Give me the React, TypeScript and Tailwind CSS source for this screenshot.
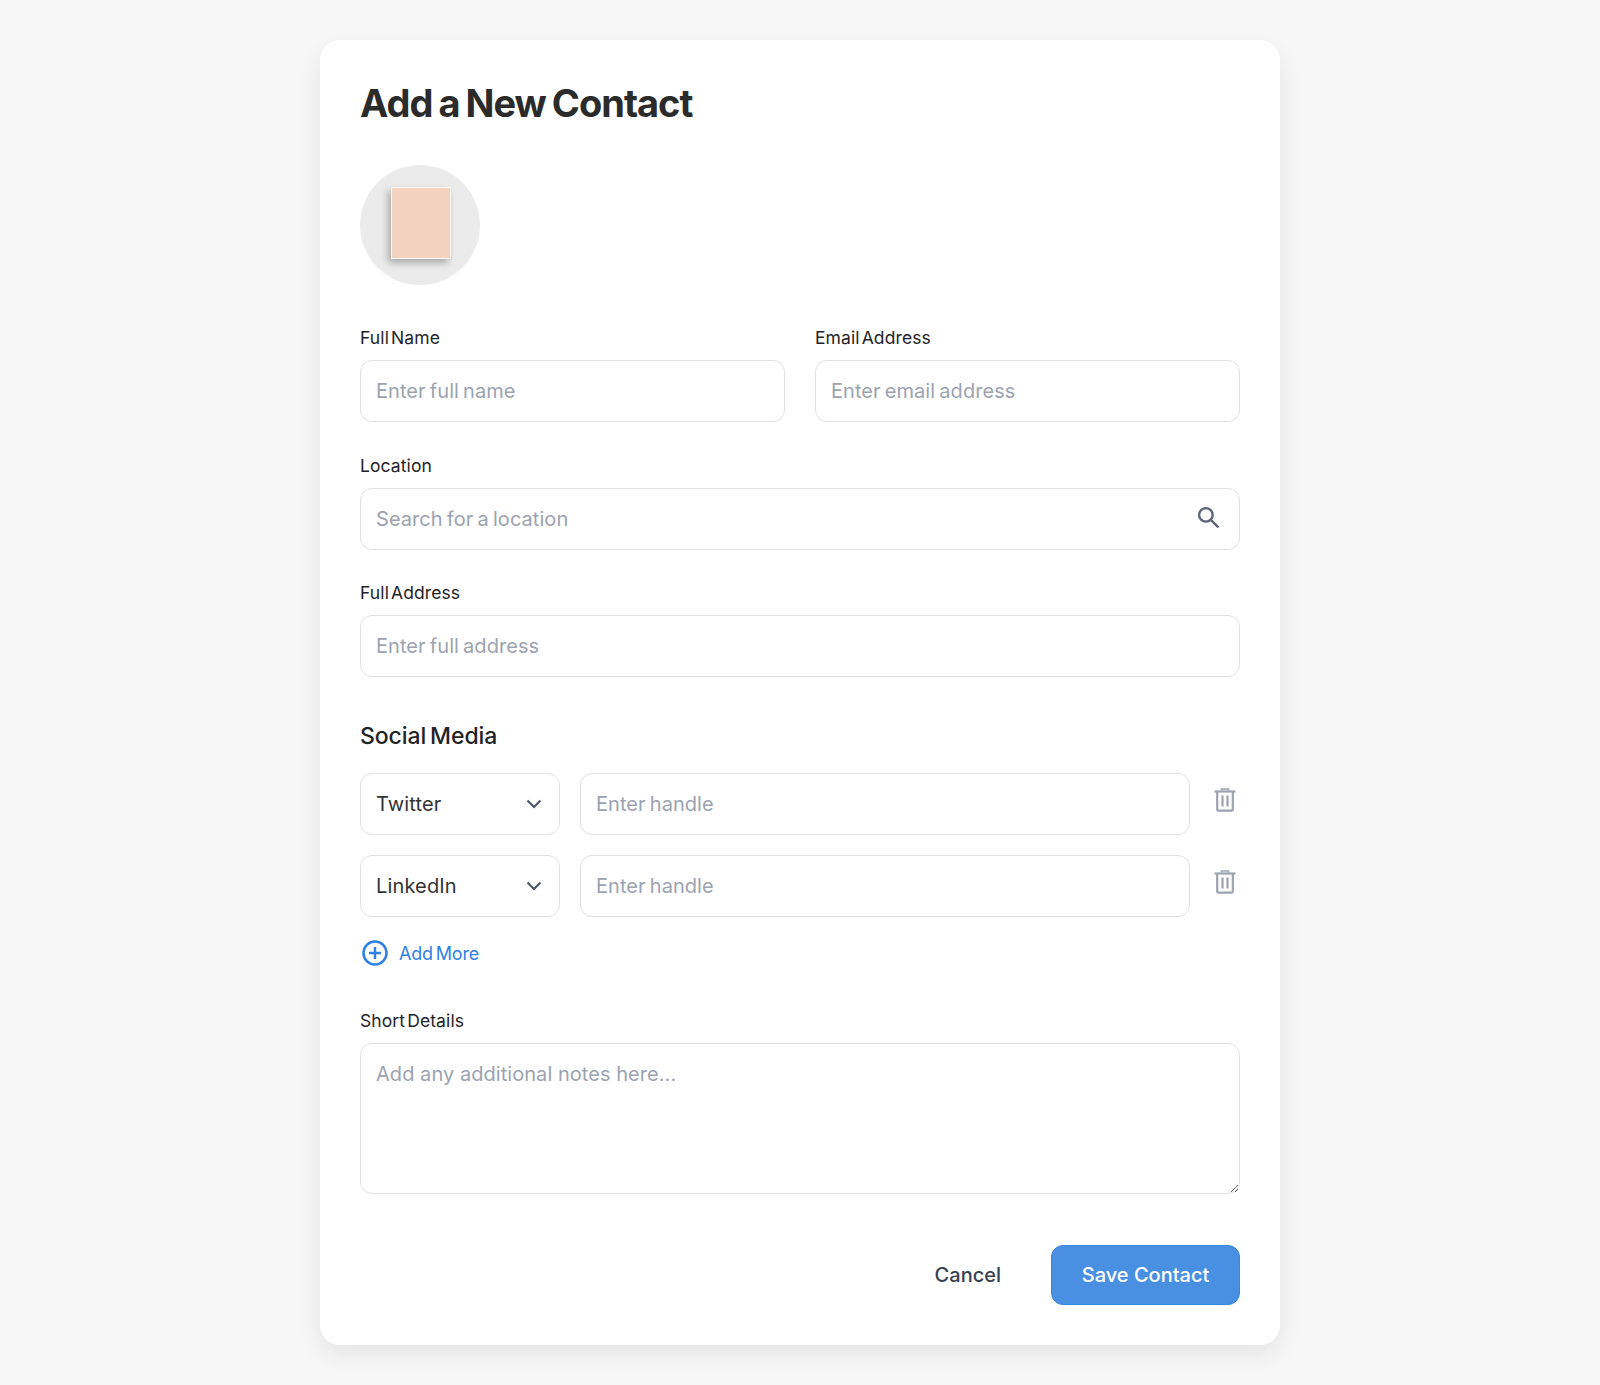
import React from "react";

const inputCls =
  "w-full h-[62px] rounded-xl border border-[#e0e0e0] bg-white px-[15px] text-[20px] text-[#333] outline-none tracking-[0.05px] [word-spacing:-1.5px] placeholder:text-[#9ca3af]";
const labelCls = "block h-6 leading-6 text-[17.5px] text-[#1f2328] tracking-[0.1px] [word-spacing:-3px] mb-[10px]";

function Trash() {
  return (
    <svg width="22" height="24" viewBox="0 0 22 24" fill="none" stroke="#9ca3af" strokeWidth="2.2" className="block">
      <path d="M0.5 3.5h21" />
      <path d="M7.5 2.5V1h7v1.5" strokeWidth="1.6" />
      <path d="M3.2 4v17.4a1.3 1.3 0 0 0 1.3 1.3h13a1.3 1.3 0 0 0 1.3-1.3V4" />
      <path d="M8.5 7.5v11M13.5 7.5v11" />
    </svg>
  );
}

function Chevron() {
  return (
    <svg width="16" height="10" viewBox="0 0 16 10" fill="none" stroke="#4b5563" strokeWidth="2" className="absolute right-[18px] top-[26px] pointer-events-none">
      <path d="M1.5 1.5 8 8l6.5-6.5" />
    </svg>
  );
}

function SocialRow({ name }: { name: string }) {
  return (
    <div className="flex items-start gap-5">
      <div className="relative w-[200px] shrink-0">
        <select className="w-full h-[62px] rounded-xl border border-[#e0e0e0] bg-white px-[15px] text-[20px] text-[#333] tracking-[0.15px] outline-none appearance-none" defaultValue={name}>
          <option>Twitter</option>
          <option>LinkedIn</option>
        </select>
        <Chevron />
      </div>
      <input className={inputCls + " flex-1 w-auto min-w-0"} placeholder="Enter handle" />
      <button className="w-[22px] ml-[4px] mr-[4px] pt-[15px] shrink-0">
        <Trash />
      </button>
    </div>
  );
}

export default function App() {
  return (
    <div className="min-h-[1385px] bg-[#f7f7f7] pt-10 font-['Inter',sans-serif]">
      <div className="mx-auto w-[960px] rounded-[20px] bg-white p-10 shadow-[0_10px_25px_rgba(0,0,0,0.08)]">
        <h1 className="text-[38px] leading-[47px] font-bold text-[#2b2b2b] tracking-[-1px] [word-spacing:-2px] mb-[38px]">Add a New Contact</h1>

        <div className="w-[120px] h-[120px] rounded-full bg-[#ebebeb] flex items-center justify-center mb-[41px]">
          <div className="w-[60px] h-[72px] ml-[2px] mb-[4px] bg-[#f4d2c0] border border-[#fdf6f2] shadow-[-3px_4px_7px_rgba(0,0,0,0.28)]" />
        </div>

        <div className="grid grid-cols-2 gap-x-[30px] mb-8">
          <div>
            <label className={labelCls}>Full Name</label>
            <input className={inputCls} placeholder="Enter full name" />
          </div>
          <div>
            <label className={labelCls}>Email Address</label>
            <input className={inputCls} placeholder="Enter email address" />
          </div>
        </div>

        <div className="mb-[31px]">
          <label className={labelCls}>Location</label>
          <div className="relative">
            <input className={inputCls} placeholder="Search for a location" />
            <svg width="25" height="25" viewBox="0 0 24 24" fill="none" stroke="#5f6678" strokeWidth="2.3" className="absolute right-[19px] top-[17px]">
              <circle cx="9.5" cy="9.5" r="6.5" />
              <path d="m14.5 14.5 7 7" />
            </svg>
          </div>
        </div>

        <div className="mb-[44px]">
          <label className={labelCls}>Full Address</label>
          <input className={inputCls} placeholder="Enter full address" />
        </div>

        <h2 className="text-[23px] leading-[30px] font-medium text-[#1f2328] tracking-[-0.1px] [word-spacing:-2px] mb-[22px]">Social Media</h2>

        <div className="flex flex-col gap-5">
          <SocialRow name="Twitter" />
          <SocialRow name="LinkedIn" />
        </div>

        <button className="flex items-center gap-[11px] mt-[21px] ml-[2px] text-[#2f80e4] text-[18px] tracking-[-0.2px] [word-spacing:-2px]">
          <svg width="26" height="26" viewBox="0 0 26 26" fill="none" stroke="#2f80e4" strokeWidth="2.5">
            <circle cx="13" cy="13" r="11.5" />
            <path d="M13 7v12M7 13h12" />
          </svg>
          <span className="pt-[2px]">Add More</span>
        </button>

        <div className="mt-[42px] mb-[51px]">
          <label className={labelCls + " [word-spacing:-1px]"}>Short Details</label>
          <textarea className="block w-full h-[151px] rounded-xl border border-[#e0e0e0] bg-white px-[15px] py-[15px] text-[20px] leading-[30px] outline-none tracking-[0.05px] placeholder:text-[#9ca3af]" placeholder="Add any additional notes here..." />
        </div>

        <div className="flex justify-end items-center gap-[50px]">
          <button className="text-[20px] text-[#374151] font-medium">Cancel</button>
          <button className="w-[189px] h-[60px] rounded-xl bg-[#4a90e2] border border-[#3b87e0] text-white text-[20px] font-medium">Save Contact</button>
        </div>
      </div>
    </div>
  );
}
